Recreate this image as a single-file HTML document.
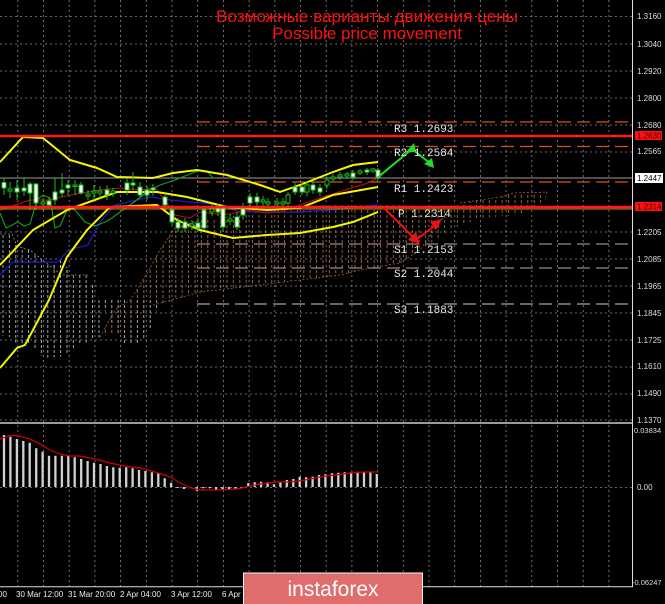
<!DOCTYPE html>
<html><head><meta charset="utf-8"><style>
html,body{margin:0;padding:0;background:#000;width:665px;height:604px;overflow:hidden}
svg{display:block}
.ax{font-family:"Liberation Sans",sans-serif;font-size:8px;fill:#ddd}
.pv{font-family:"Liberation Mono",monospace;font-size:11px;fill:#e8e8e8}
.tl{font-family:"Liberation Sans",sans-serif;font-size:8px;fill:#eee}
</style></head><body>
<svg width="665" height="604" viewBox="0 0 665 604" xmlns="http://www.w3.org/2000/svg">
<defs>
<pattern id="wh" width="6.4" height="5" patternUnits="userSpaceOnUse"><line x1="3" y1="0" x2="3" y2="3" stroke="#cfcfcf" stroke-width="0.8"/></pattern>
<pattern id="or" width="6.4" height="5" patternUnits="userSpaceOnUse"><line x1="3" y1="0" x2="3" y2="3" stroke="#b87c48" stroke-width="0.8"/></pattern>
</defs>
<rect width="665" height="604" fill="#000"/>
<g stroke="#8a8a8a" stroke-width="0.8" stroke-dasharray="2,3">
<path d="M17.8 0V587M43.5 0V587M69.2 0V587M94.9 0V587M120.6 0V587M146.3 0V587M172 0V587M197.7 0V587M223.4 0V587M249.1 0V587M274.8 0V587M300.5 0V587M326.2 0V587M351.9 0V587M377.6 0V587M403.3 0V587M429 0V587M454.7 0V587M480.4 0V587M506.1 0V587M531.8 0V587M557.5 0V587M583.2 0V587M608.9 0V587"/>
<path d="M0 16.5H632M0 44H632M0 71H632M0 98H632M0 125H632M0 152H632M0 232H632M0 259H632M0 286H632M0 313H632M0 340H632M0 367H632M0 394H632M0 420H632M0 487.5H632"/>
</g>
<!-- cloud -->
<polygon points="0,234 12,234 17,246 30,250 45,262 62,270 70,275 88,275 100,300 110,320 125,345 140,345 150,330 160,300 100,300 60,260 30,280 10,290 0,300" fill="url(#wh)"/>
<path d="M0,234 12,234 17,246 30,250 45,262 62,275 88,275" fill="none" stroke="#bbb" stroke-width="0.6" stroke-dasharray="2,2"/>
<polygon points="0,300 0,335 10,337 18,345 30,345 44,358 60,357 80,345 100,337 100,300 60,260 30,280" fill="url(#wh)"/>
<polygon points="100,337 115,310 130,300 140,285 150,268 160,250 175,228 200,220 240,215 280,210 320,205 360,203 400,205 440,206 460,203 500,197 513,193 547,192 545,200 520,215 480,218 450,230 420,250 400,263 370,268 340,275 300,280 260,285 230,288 200,292 180,298 160,305 150,306 140,308 125,330" fill="url(#or)"/>
<path d="M100,337 115,310 130,300 140,285 150,268 160,250 175,228 200,220" fill="none" stroke="#b0703c" stroke-width="0.7" stroke-dasharray="2,2"/>
<path d="M460,203 500,197 513,193 547,192 545,200" fill="none" stroke="#b0703c" stroke-width="0.7" stroke-dasharray="2,2"/>
<path d="M445,215 420,250 400,263 370,268 340,275 300,280 260,285 200,292 150,306" fill="none" stroke="#b0703c" stroke-width="0.7" stroke-dasharray="2,2"/>
<!-- pivot lines -->
<g stroke-width="1.2" stroke-dasharray="13,6">
<path d="M197 122H632M197 146.5H632M197 182H632" stroke="#d8501e"/>
<path d="M197 244H632M197 268H632" stroke="#a48484"/>
<path d="M197 304H632" stroke="#c09a9a"/>
</g>
<path d="M0 178H632" stroke="#9a9a9a" stroke-width="1"/>
<polyline fill="none" stroke="#1a1ad0" stroke-width="1.2" points="0,275 13,262 58,262 68,250 88,245 100,222 115,205 150,197 170,200 220,205 240,212 270,212 300,212 330,210 378,205"/>
<polyline fill="none" stroke="#19a019" stroke-width="1.1" points="0,213 6,228 12,225 18,222 24,226 30,224 37,200 43,195 50,198 55,228 60,226 68,208 75,210 85,222 95,226 105,222 112,218 120,212 130,205 150,190 160,185 175,180 200,170 207,171 213,178"/>
<polyline fill="none" stroke="#c01010" stroke-width="1" points="0,210 30,200 50,200 70,195 100,190 120,188 140,190 155,188 165,200 175,215 190,218 200,212 215,214 230,214 250,210 265,213 280,212 300,205 320,198 345,190 365,184 378,178"/>
<polyline fill="none" stroke="#f5f500" stroke-width="2" points="0,162 23,137 43,138 70,160 97,168 117,177 153,178 173,173 197,170 227,175 260,185 280,192 300,185 333,172 353,165 378,162"/>
<polyline fill="none" stroke="#f5f500" stroke-width="2" points="0,265 33,230 67,210 100,198 117,192 157,192 187,197 227,207 267,210 300,208 333,195 378,187"/>
<polyline fill="none" stroke="#f5f500" stroke-width="2" points="0,368 17,348 25,345 49,300 67,257 87,230 110,207 157,205 177,220 200,230 233,238 267,235 300,233 333,227 353,222 378,212"/>
<g stroke="#19c019" stroke-width="1">
<path d="M4 178V195M10 182V198M17 180V200M24 178V196M30 182V210M36 183V210M43 198V210M49 198V208M55 178V205M62 173V197M68 180V195M75 180V195M81 182V195M88 190V200M94 185V200M100 186V198M107 185V200M113 188V197M127 178V195M133 172V190M140 182V198M147 186V200M153 184V196M165 195V210M172 205V225M178 218V232M185 218V232M192 220V230M198 218V232M204 206V230M212 204V216M218 204V216M223 205V232M230 214V225M237 212V230M243 203V220M250 193V207M257 193V206M263 196V206M268 198V208M277 198V208M283 198V208M288 192V206M295 183V195M302 183V195M307 181V196M313 181V194M320 184V196M327 177V189M333 174V182M340 172V180M347 172V179M353 170V180M360 169V175M367 168V175M373 168V173M378 168V180"/>
<g fill="#fff">
<rect x="2" y="182.5" width="4" height="5.5"/><rect x="15" y="188" width="4" height="4"/><rect x="22" y="188" width="4" height="3"/><rect x="28" y="184" width="4" height="9"/><rect x="34" y="184" width="4" height="19"/><rect x="47" y="201" width="4" height="4"/><rect x="53" y="192" width="4" height="8"/><rect x="60" y="190" width="4" height="3"/><rect x="66" y="185" width="4" height="3"/><rect x="79" y="185" width="4" height="8"/><rect x="105" y="190" width="4" height="5"/><rect x="125" y="183" width="4" height="7"/><rect x="131" y="183" width="4" height="2"/><rect x="138" y="187" width="4" height="8"/><rect x="145" y="190" width="4" height="5"/><rect x="151" y="188" width="4" height="2"/><rect x="163" y="197" width="4" height="8"/><rect x="170" y="210" width="4" height="12"/><rect x="176" y="222" width="4" height="6"/><rect x="183" y="222" width="4" height="6"/><rect x="196" y="223" width="4" height="5"/><rect x="202" y="210" width="4" height="18"/><rect x="216" y="208" width="4" height="4"/><rect x="221" y="208" width="4" height="19"/><rect x="235" y="217" width="4" height="10"/><rect x="241" y="208" width="4" height="7"/><rect x="248" y="197" width="4" height="6"/><rect x="255" y="197" width="4" height="5"/><rect x="293" y="187" width="4" height="5"/><rect x="300" y="187" width="4" height="5"/><rect x="311" y="185" width="4" height="5"/><rect x="318" y="188" width="4" height="4"/><rect x="351" y="173" width="4" height="4"/><rect x="365" y="170" width="4" height="2"/><rect x="376" y="170" width="4" height="7"/>
</g>
<g fill="#000">
<rect x="8" y="189" width="4" height="2"/><rect x="41" y="202" width="4" height="2"/><rect x="73" y="185" width="4" height="1.5"/><rect x="86" y="194" width="4" height="2"/><rect x="92" y="191" width="4" height="2"/><rect x="98" y="191" width="4" height="2"/><rect x="111" y="191" width="4" height="2"/><rect x="190" y="224" width="4" height="2"/><rect x="210" y="208" width="4" height="4"/><rect x="228" y="219" width="4" height="2"/><rect x="261" y="200" width="4" height="2"/><rect x="266" y="202" width="4" height="2"/><rect x="275" y="202" width="4" height="2"/><rect x="281" y="202" width="4" height="2"/><rect x="286" y="195" width="4" height="8"/><rect x="305" y="185" width="4" height="7"/><rect x="325" y="180" width="4" height="5"/><rect x="331" y="177" width="4" height="2"/><rect x="338" y="175" width="4" height="2"/><rect x="345" y="174" width="4" height="2"/><rect x="358" y="171" width="4" height="2"/><rect x="371" y="169" width="4" height="2"/>
</g>
</g>
<path d="M0 136H632" stroke="#ff1a1a" stroke-width="2.5"/>
<path d="M0 207H632" stroke="#ff1a1a" stroke-width="2.5"/>
<path d="M0 209H632" stroke="#ffb000" stroke-width="0.8"/>
<g stroke="#22dd22" stroke-width="2" fill="none"><path d="M377 178L412 149L431 164"/></g>
<polygon points="414,143 406,152 416,152" fill="#22dd22"/>
<polygon points="434,168 424,164 432,158" fill="#22dd22"/>
<g stroke="#ee1111" stroke-width="2" fill="none"><path d="M384 208L416 240L437 224"/></g>
<polygon points="420,244 408,240 416,232" fill="#ee1111"/>
<polygon points="442,219 430,222 436,230" fill="#ee1111"/>
<text class="pv" x="394" y="132">R3 1.2693</text>
<text class="pv" x="394" y="156">R2 1.2584</text>
<text class="pv" x="394" y="192">R1 1.2423</text>
<text class="pv" x="398" y="217">P 1.2314</text>
<text class="pv" x="394" y="253">S1 1.2153</text>
<text class="pv" x="394" y="277">S2 1.2044</text>
<text class="pv" x="394" y="313">S3 1.1883</text>
<text x="367" y="22" text-anchor="middle" fill="#ff1010" font-family="Liberation Sans, DejaVu Sans, sans-serif" font-size="17" textLength="302" lengthAdjust="spacingAndGlyphs">Возможные варианты движения цены</text>
<text x="367" y="39" text-anchor="middle" fill="#ff1010" font-family="Liberation Sans, sans-serif" font-size="17">Possible price movement</text>
<path d="M0 423H633" stroke="#ccc" stroke-width="1.5"/>
<g stroke="#d0d0d0" stroke-width="2.3">
<path d="M4 487V435M10.4 487V436.7M16.9 487V439M23.3 487V441M29.7 487V442.7M36.2 487V448.3M42.6 487V451.7M49 487V455.7M55.4 487V455.7M61.9 487V455.7M68.3 487V455.7M74.7 487V457.3M81.2 487V459M87.6 487V461M94 487V462.7M100.5 487V464M106.9 487V466M113.3 487V467.3M119.7 487V467.7M126.2 487V467.3M132.6 487V468.3M139 487V470M145.4 487V471M151.9 487V472.3M158.3 487V473.3M164.7 487V478.3M171.1 487V482.7M177.6 487V488M184 487V489M190.4 487V488.3M196.9 487V490.7M203.3 487V488.3M209.7 487V488.3M216.1 487V490M222.6 487V490M229 487V490M235.4 487V489.3M241.9 487V488.3M248.3 487V483M254.7 487V482.3M261.1 487V481.7M267.6 487V482.3M274 487V484.3M280.4 487V481.7M286.8 487V480M293.3 487V479M299.7 487V476.7M306.1 487V477.3M312.6 487V476.7M319 487V475M325.4 487V474.3M331.9 487V473.3M338.3 487V472.7M344.7 487V472.3M351.1 487V472.3M357.6 487V471.7M364 487V472.3M370.4 487V472.3M376.8 487V474"/>
</g>
<polyline fill="none" stroke="#d00000" stroke-width="1.2" points="0,439 10,435.5 17,435.5 30,439 40,444 50,450 60,454 70,456 80,456 95,459 110,463 125,466 140,468 155,472 165,475 172,478 180,483 190,487.5 200,490 215,490 230,489.5 240,488.5 250,486 260,484 275,482 290,482 305,480 320,477 335,475 350,473 365,472 378,472"/>
<path d="M632.5 0V587M0 586.7H633" stroke="#ddd" stroke-width="1"/>
<g class="ax">
<text x="637" y="19">1.3160</text><text x="637" y="47">1.3040</text><text x="637" y="74">1.2920</text><text x="637" y="101">1.2800</text><text x="637" y="128">1.2680</text><text x="637" y="154">1.2565</text><text x="637" y="235">1.2205</text><text x="637" y="262">1.2085</text><text x="637" y="289">1.1965</text><text x="637" y="316">1.1845</text><text x="637" y="343">1.1725</text><text x="637" y="369">1.1610</text><text x="637" y="396">1.1490</text><text x="637" y="423">1.1370</text>
<text x="634" y="433" font-size="7.5">0.03834</text><text x="637" y="490">0.00</text><text x="632" y="585" font-size="7.5">-0.06247</text>
</g>
<rect x="635" y="131" width="27" height="9" fill="#ff1010"/><text x="637" y="138.5" class="ax" style="fill:#400">1.2630</text>
<rect x="635" y="173" width="28" height="10" fill="#fff"/><text x="637" y="181" class="ax" style="fill:#000">1.2447</text>
<rect x="635" y="202" width="27" height="9" fill="#ff1010"/><text x="637" y="209.5" class="ax" style="fill:#400">1.2314</text>
<g class="tl">
<text x="-2" y="597">00</text><text x="16" y="597">30 Mar 12:00</text><text x="68" y="597">31 Mar 20:00</text><text x="120" y="597">2 Apr 04:00</text><text x="171" y="597">3 Apr 12:00</text><text x="222" y="597">6 Apr</text>
</g>
<rect x="243.5" y="573" width="179" height="32" fill="#e06c6c" stroke="#f4f4f4" stroke-width="1"/>
<text x="333" y="596" text-anchor="middle" fill="#fff" font-family="Liberation Sans, sans-serif" font-size="21">instaforex</text>
</svg>
</body></html>
